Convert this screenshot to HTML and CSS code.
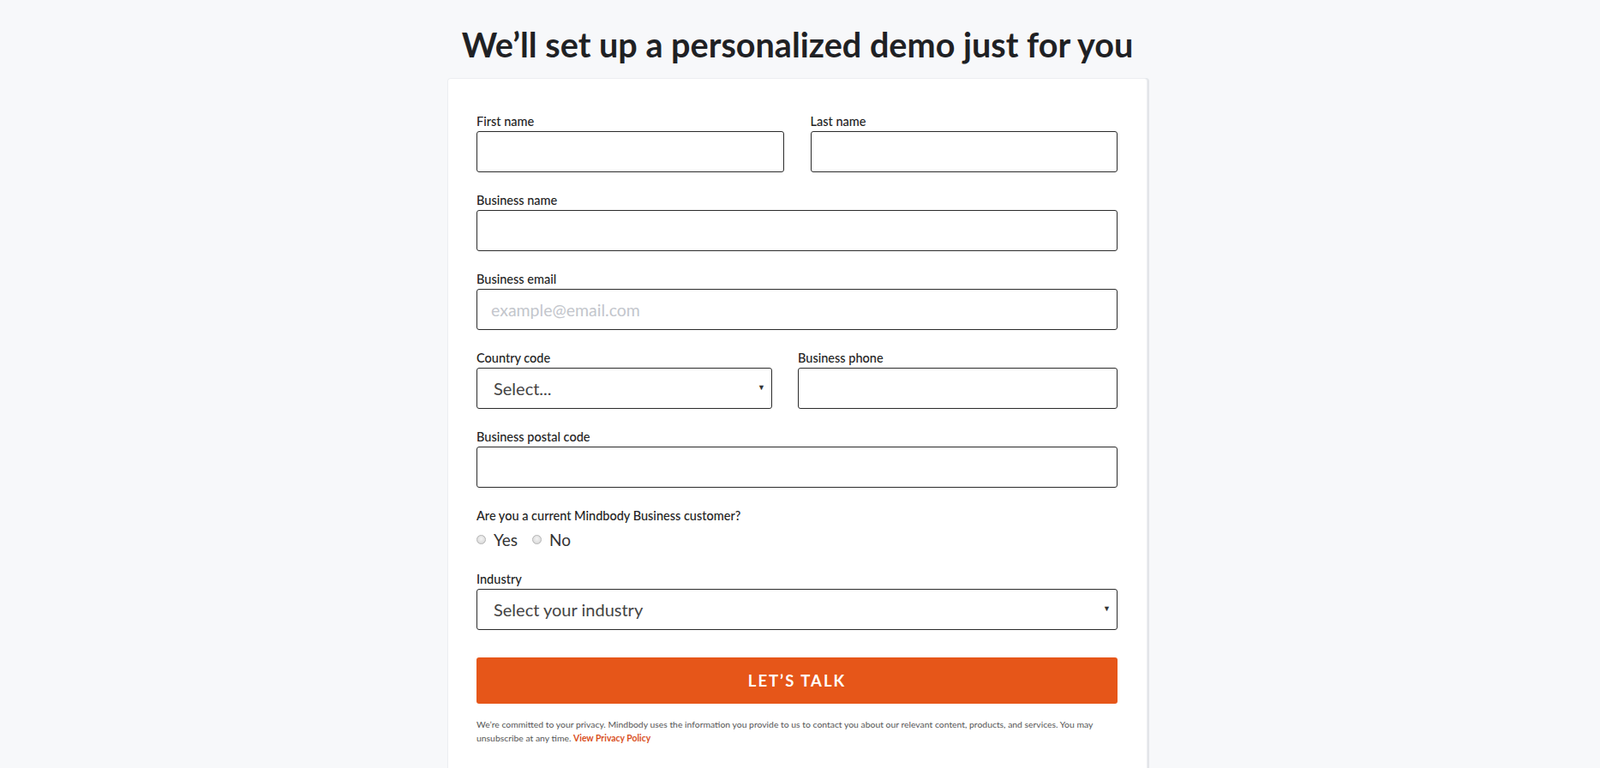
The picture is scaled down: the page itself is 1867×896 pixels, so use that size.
FILE: index.html
```html
<!DOCTYPE html>
<html lang="en">
    <head>
        <meta charset="UTF-8">
        <meta name="viewport" content="width=device-width, initial-scale=1.0">
        <title>Request a demo</title>
        <link rel="stylesheet" href="styles.css">
    </head>
    <body>
        <div class="page">
            <h1 class="title">We’ll set up a personalized demo just for you</h1>
            <form class="card">
                <div class="row two">
                    <div class="field">
                        <label for="first">First name</label>
                        <input type="text" id="first">
                    </div>
                    <div class="field">
                        <label for="last">Last name</label>
                        <input type="text" id="last">
                    </div>
                </div>
                <div class="field">
                    <label for="bname">Business name</label>
                    <input type="text" id="bname">
                </div>
                <div class="field">
                    <label for="email">Business email</label>
                    <input type="email" id="email" placeholder="example@email.com">
                </div>
                <div class="row phone">
                    <div class="field">
                        <label for="country">Country code</label>
                        <div class="select">
                            <select id="country">
                                <option>Select...</option>
                            </select>
                        </div>
                    </div>
                    <div class="field">
                        <label for="phone">Business phone</label>
                        <input type="tel" id="phone">
                    </div>
                </div>
                <div class="field">
                    <label for="postal">Business postal code</label>
                    <input type="text" id="postal">
                </div>
                <div class="field question">
                    <label>Are you a current Mindbody Business customer?</label>
                    <div class="radios">
                        <label class="radio"><input type="radio" name="customer"> Yes</label>
                        <label class="radio"><input type="radio" name="customer"> No</label>
                    </div>
                </div>
                <div class="field">
                    <label for="industry">Industry</label>
                    <div class="select">
                        <select id="industry">
                            <option>Select your industry</option>
                        </select>
                    </div>
                </div>
                <button type="button" class="submit">LET’S TALK</button>
                <p class="privacy">We’re committed to your privacy. Mindbody uses the information you provide to us to contact you about our relevant content, products, and services. You may unsubscribe at any time. <a href="#">View Privacy Policy</a></p>
            </form>
        </div>
    </body>
</html>
```

FILE: styles.css
```css
body {
    margin: 0;
    background-color: #f7f8fa;
    font-family: Lato, "Open Sans", sans-serif;
    color: #222;
    overflow: hidden;
}
.page {
    display: flex;
    flex-direction: column;
    align-items: center;
    padding-right: 6px;
}
.title {
    margin: 29px 0 17px;
    font-size: 39.6px;
    line-height: 46px;
    font-weight: 700;
    color: #1f2124;
}
.card {
    width: 815px;
    box-sizing: border-box;
    padding: 42px 34px 60px 33px;
    background-color: #fff;
    border-radius: 3px;
    box-shadow: 0 0 0 1px #eceef1, 2px 0 0 1px #e3e5e9;
}
.row {
    display: grid;
    column-gap: 31px;
}
.row.two {
    grid-template-columns: 1fr 1fr;
}
.row.phone {
    grid-template-columns: 345px 1fr;
    column-gap: 30px;
}
.field {
    margin-bottom: 25px;
}
.field > label {
    display: block;
    font-size: 14.5px;
    font-weight: 500;
    line-height: 16px;
    margin-bottom: 3px;
    color: #222;
}
.field input[type="text"],
.field input[type="email"],
.field input[type="tel"],
.select select {
    display: block;
    width: 100%;
    height: 48px;
    box-sizing: border-box;
    border: 1px solid #2b2b2b;
    border-radius: 3px;
    padding: 0 16px;
    font-family: Lato, sans-serif;
    font-size: 19.5px;
    color: #444;
    background-color: #fff;
}
.field input::placeholder {
    color: #c3c6cc;
}
.select {
    position: relative;
}
.select select {
    appearance: none;
    padding-left: 19px;
    font-size: 20px;
    color: #444;
}
.select::after {
    content: "▼";
    position: absolute;
    right: 8px;
    top: 17px;
    font-size: 9px;
    color: #333;
    pointer-events: none;
}
.question > label {
    margin-bottom: 5px;
}
.radios {
    display: flex;
    gap: 17px;
    height: 28px;
    align-items: center;
}
.radio {
    display: flex;
    align-items: center;
    gap: 9px;
    font-size: 19px;
    color: #333;
}
.radio input {
    appearance: none;
    width: 11px;
    height: 11px;
    margin: 0;
    border: 1px solid #b4b4b4;
    border-radius: 50%;
    background: radial-gradient(circle at 50% 40%, #f4f4f4, #d3d3d3);
}
.submit {
    display: block;
    width: 100%;
    height: 54px;
    margin-top: 32px;
    border: none;
    border-radius: 3px;
    background-color: #e65619;
    color: #fff;
    font-family: Lato, sans-serif;
    font-size: 18.5px;
    font-weight: 700;
    letter-spacing: 2px;
    cursor: pointer;
}
.privacy {
    margin: 17px 0 0;
    font-size: 10.4px;
    line-height: 15.5px;
    color: #555;
}
.privacy a {
    color: #d9501e;
    font-weight: 700;
    text-decoration: none;
}
```
